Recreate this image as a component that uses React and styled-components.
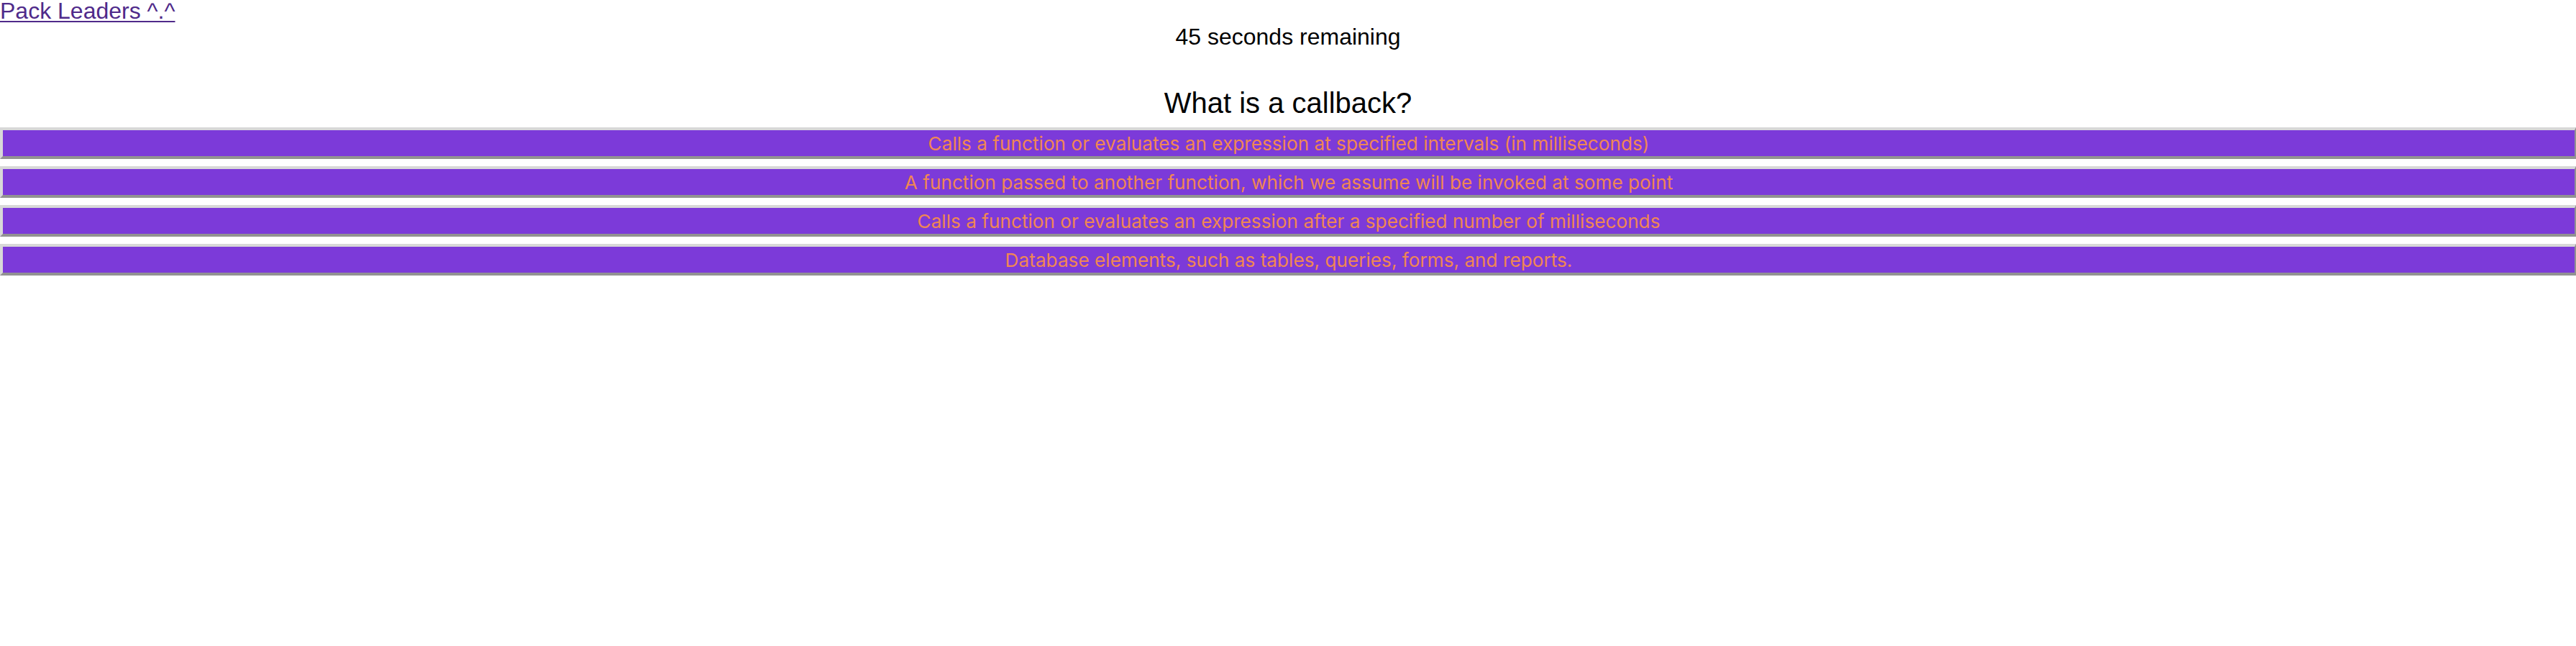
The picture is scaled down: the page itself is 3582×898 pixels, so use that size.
import React from "react";
import styled, { createGlobalStyle } from "styled-components";

const GlobalStyle = createGlobalStyle`
    body {
        margin: 0;
        background: #ffffff;
        font-family: "Liberation Sans", Arial, sans-serif;
    }
`;

const Page = styled.div`
    display: flex;
    flex-direction: column;
`;

const NavLink = styled.a`
    align-self: flex-start;
    font-size: 32px;
    line-height: 30px;
    color: #4f2a8a;
    text-decoration: underline;
    text-underline-offset: 3px;
    text-decoration-thickness: 2px;
`;

const Timer = styled.div`
    margin-top: 3px;
    font-size: 32px;
    line-height: 36px;
    text-align: center;
    color: #000;
`;

const Question = styled.h2`
    margin: 51px 0 11px;
    font-size: 40px;
    font-weight: normal;
    line-height: 46px;
    text-align: center;
    color: #000;
`;

const Answers = styled.div`
    display: flex;
    flex-direction: column;
    gap: 10px;
`;

const AnswerButton = styled.button`
    display: flex;
    align-items: center;
    justify-content: center;
    width: 100%;
    height: 44px;
    padding: 0;
    background: #7c3ad9;
    color: #f08753;
    font-family: Inter, "Noto Sans", sans-serif;
    font-size: 26.2px;
    border-style: solid;
    border-width: 4px 2px 4px 4px;
    border-color: #d8d8d8 #929292 #929292 #d8d8d8;
    cursor: pointer;
`;

const answers = [
    "Calls a function or evaluates an expression at specified intervals (in milliseconds)",
    "A function passed to another function, which we assume will be invoked at some point",
    "Calls a function or evaluates an expression after a specified number of milliseconds",
    "Database elements, such as tables, queries, forms, and reports.",
];

const App = () => {
    return (
        <Page>
            <GlobalStyle />
            <NavLink href="#">Pack Leaders ^.^</NavLink>
            <Timer>45 seconds remaining</Timer>
            <Question>What is a callback?</Question>
            <Answers>
                {answers.map((answer) => (
                    <AnswerButton key={answer}>{answer}</AnswerButton>
                ))}
            </Answers>
        </Page>
    );
};

export default App;
